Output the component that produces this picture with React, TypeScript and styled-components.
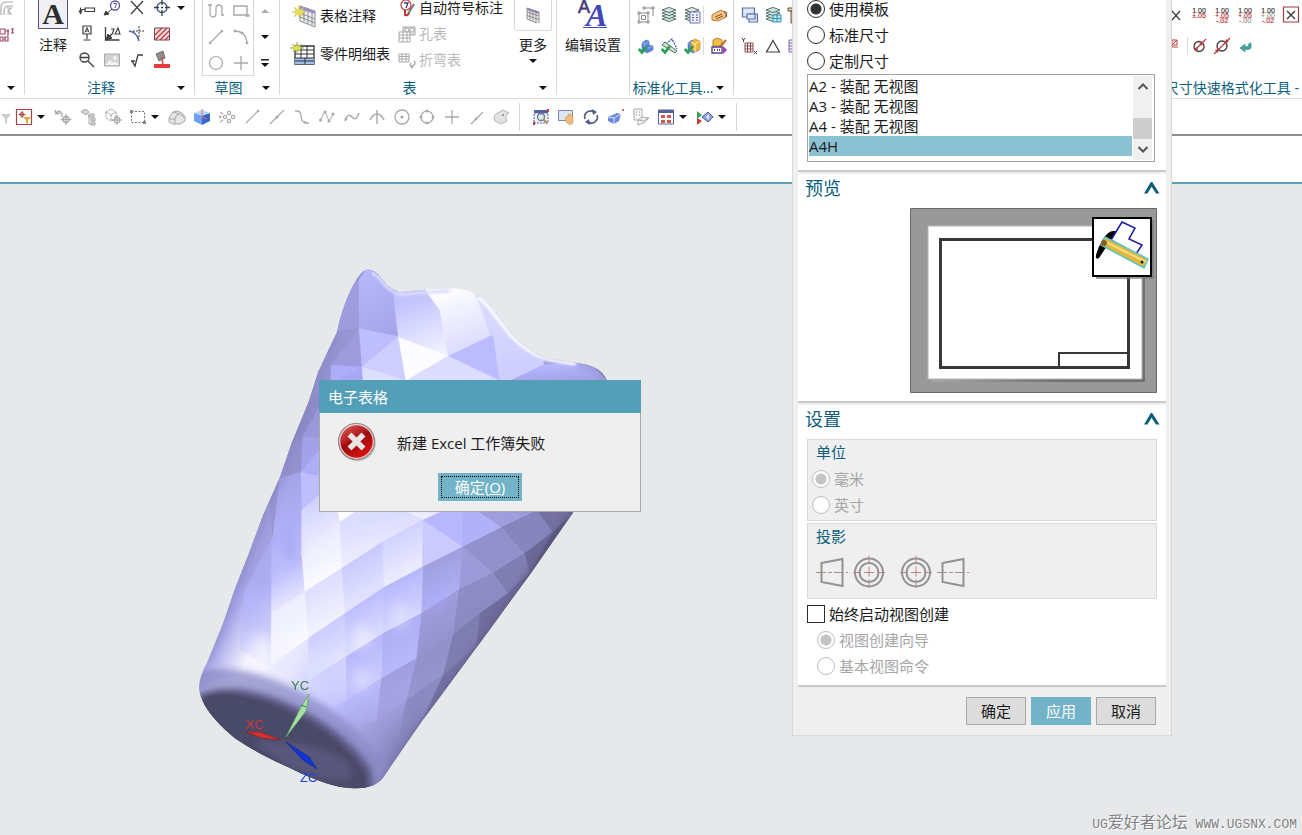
import React, { useState } from "react";
import styled, { createGlobalStyle, css } from "styled-components";

const c = {
  teal: "#0d5f7d",
  bar: "#539fb8",
  accent: "#72b3c8",
  select: "#8ac2d1",
  face: "#efefef",
  line: "#d9d9d9",
  text: "#1b1b1b",
  muted: "#a6a6a6",
  canvas: "#e6e8ea",
};

const GlobalStyle = createGlobalStyle`
  * { box-sizing: border-box; }
  body { margin: 0; background: ${c.canvas}; }
  body, button, input { font-family: "Open Sans", "Noto Sans CJK SC", sans-serif; }
  button { margin: 0; padding: 0; border: 0; background: none; color: inherit; cursor: pointer; }
`;

/* ---------- shell ---------- */

const Shell = styled.div`
  position: relative;
  display: flex;
  flex-direction: column;
  min-height: 100vh;
  overflow: hidden;
  color: ${c.text};
  font-size: 14px;
`;

const Ribbon = styled.header`
  display: flex;
  height: 99px;
  overflow: hidden;
  background: #fff;
  border-bottom: 1px solid ${c.line};
`;

const Group = styled.section<{ $width: number; $last?: boolean }>`
  display: flex;
  flex: none;
  flex-direction: column;
  width: ${(p) => p.$width}px;
  height: 95px;
  border-right: 1px solid ${c.line};
  ${(p) => p.$last && css`margin-left: auto; border-right: 0;`}
`;

const GroupBody = styled.div<{ $indent?: number }>`
  display: flex;
  flex: 1;
  align-items: flex-start;
  padding-left: ${(p) => p.$indent ?? 0}px;
`;

const GroupLabel = styled.footer<{ $end?: boolean }>`
  display: flex;
  align-items: center;
  height: 14px;
  padding-right: ${(p) => (p.$end ? 3 : 9)}px;
  line-height: 14px;
  color: ${c.teal};
  white-space: nowrap;
  justify-content: flex-end;

  span {
    flex: ${(p) => (p.$end ? "none" : 1)};
    text-align: center;
  }
`;

const IconGrid = styled.div<{ $cols: number; $cell: number; $loose?: boolean }>`
  display: grid;
  grid-template-columns: repeat(${(p) => p.$cols}, ${(p) => p.$cell}px);
  grid-auto-rows: ${(p) => (p.$loose ? 18 : 16)}px;
  row-gap: ${(p) => (p.$loose ? 13 : 10)}px;
  padding-top: ${(p) => (p.$loose ? 6 : 0)}px;
`;

const IconButton = styled.button<{ $ruled?: boolean }>`
  display: flex;
  align-items: center;
  justify-content: center;
  border-left: ${(p) => (p.$ruled ? `1px solid ${c.line}` : "0")};

  svg { flex: none; overflow: visible; }
`;

const SketchBox = styled.div`
  padding: 3px 0 4px;
  border: 1px solid ${c.line};
  border-top: 0;
`;

const ArrowColumn = styled.div`
  display: flex;
  flex-direction: column;
  align-items: center;
  gap: 10px;
  width: 22px;
  padding-top: 3px;

  button { height: 16px; }
`;

const BigButton = styled.button<{ $width: number }>`
  display: flex;
  flex-direction: column;
  align-items: center;
  width: ${(p) => p.$width}px;
  font-size: 14px;
  line-height: 16px;
  white-space: nowrap;

  > span { margin-top: 6px; }
  > svg:last-child { margin-top: 6px; }
`;

const LetterTile = styled.i`
  width: 30px;
  height: 29px;
  margin-bottom: 2px;
  border: 1px solid #57508a;
  border-top: 0;
  background: #f0f0f4;
  color: #2d2d30;
  font: bold 30px/28px "Liberation Serif", serif;
`;

const MoreTile = styled.i`
  display: flex;
  align-items: center;
  justify-content: center;
  width: 38px;
  height: 31px;
  border: 1px solid ${c.line};
  border-top: 0;
  border-radius: 0 0 3px 3px;
`;

const LettersIcon = styled.i`
  display: flex;
  justify-content: center;
  height: 31px;
`;

const RowStack = styled.div<{ $large?: boolean }>`
  display: grid;
  grid-auto-rows: ${(p) => (p.$large ? 24 : 16)}px;
  row-gap: ${(p) => (p.$large ? 14 : 10)}px;
  padding-top: ${(p) => (p.$large ? 4 : 0)}px;
  margin-right: ${(p) => (p.$large ? 9 : 11)}px;
`;

const RowButton = styled.button`
  display: flex;
  align-items: center;
  gap: 4px;
  font-size: 14px;
  line-height: 16px;
  white-space: nowrap;

  &:disabled { color: #b9b9b9; }
  svg { flex: none; overflow: visible; }
`;

const Toolbar = styled.nav`
  display: flex;
  align-items: center;
  height: 37px;
  background: #fff;
  border-bottom: 2px solid #8a9092;

  button { width: 25px; height: 24px; flex: none; }
  button:first-child { width: 11px; justify-content: flex-end; }
`;

const ToolArrow = styled(IconButton)`
  && { width: 14px; justify-content: flex-start; padding-left: 1px; }
`;

const Divider = styled.span`
  width: 1px;
  height: 28px;
  margin: 0 8px 0 5px;
  background: ${c.line};
`;

const TabStrip = styled.div`
  height: 48px;
  background: #fff;
  border-bottom: 2px solid #5a9fb5;
`;

const Viewport = styled.main`
  display: flex;
  flex: 1;
  align-items: flex-start;
  background: ${c.canvas};

  svg { display: block; flex: none; }
`;

const Watermark = styled.p`
  position: absolute;
  right: 5px;
  bottom: 0;
  margin: 0;
  color: #808284;
  font: 13px/20px "Liberation Mono", monospace;
  text-shadow: 1px 1px 0 #fff;
  white-space: nowrap;

  span { font: 16px/20px "Noto Sans CJK SC", sans-serif; }
`;

/* ---------- small shared drawings ---------- */

const Down = ({ up, bar }: { up?: boolean; bar?: boolean }) => (
  <svg width="8" height={bar ? 8 : 4} viewBox={bar ? "0 0 8 8" : "0 0 8 4"}>
    {bar && <path d="M0 .8H8" stroke="#111" strokeWidth="1.4" />}
    <path d={up ? "M0 4H8L4 0z" : bar ? "M0 4H8L4 8z" : "M0 0H8L4 4z"} fill={up ? "#aaa" : "#111"} />
  </svg>
);

const G = "#a9a9a9";
const K = "#3c3c3c";
const R = "#c03a3a";
const B = "#4a5fb0";

const stack = (tint: string) => (
  <g fill={tint} stroke="#4a6460" strokeWidth=".9">
    {[12, 9, 6, 3].map((y) => <path key={y} d={`M1 ${y}l7-2.6 7 2.6-7 2.6z`} />)}
  </g>
);
const tick = <path d="M.8 11l3.2 3.4L9 8" fill="none" stroke="#27a052" strokeWidth="2.6" />;
const cubeBlue = (
  <g stroke="#3f5fae" strokeWidth=".5">
    <path d="M4 5l4-3 3 1v4l4 1v4l-6 3-5-3z" fill="#5c86dd" /><path d="M4 5l3 1 4-3M7 6v3l4 1 4-2" fill="none" stroke="#c5d9ff" />
  </g>
);
const numerals = (a: string, b: string, ca: string, cb: string) => (
  <g fontFamily="Liberation Sans" fontSize="7" textAnchor="middle">
    <text x="8" y="6" fill="#222" stroke="#222" strokeWidth=".1">1.00</text>
    <text x="8" y="11" fill={ca} stroke={ca} strokeWidth=".2">{a}</text>
    <text x="8" y="16" fill={cb} stroke={cb} strokeWidth=".2">{b}</text>
  </g>
);

const art: Record<string, React.ReactNode> = {
  leader: <path d="M1.500 13V7.500M1.500 9.500H6M6 8h9.500v3.500H6zM0 10.500l1.500 3 1.500-3" fill="none" stroke={K} strokeWidth="1.200" />,
  balloon: <g fill="none" stroke={K}><circle cx="11" cy="5.500" r="4.500" stroke="#5a55a0" strokeWidth="1.300" /><path d="M8 9l-7 6" /><path d="M0 15l2-4 3 3z" fill={K} /><path d="M9.500 3.500h3L11 8" stroke="#5a55a0" /></g>,
  cross: <path d="M2 1l12 13M14 1L2 14" stroke={K} strokeWidth="1.200" />,
  target: <g fill="none" stroke="#39589a" strokeWidth="1.300"><circle cx="8" cy="7.500" r="5" /><path d="M8-1v6M8 10v6M0 7.500h5M11 7.500h5M7 7.500h2" stroke={K} /></g>,
  datum: <g fill="none" stroke={K}><path d="M4 0h8v8H4zM8 8v5M4.500 14h7" strokeWidth="1.200" /><path d="M6 6.500L8 1.500l2 5M6.500 5h3" /></g>,
  angle: <g fill="none" stroke={K}><path d="M1.500 1v13h14M2 14L9 7" strokeWidth="1.300" /><path d="M2 14l2-6 4 4z" fill={K} /><path d="M7 3h3L8.500 7M11 8l3-6 2 6z" strokeWidth="1.100" /></g>,
  arcCentre: <g fill="none"><path d="M0 5q8 1 10 10" stroke={B} strokeWidth="1.400" /><path d="M10 0v11M4 5h12" stroke={K} strokeDasharray="2 1" /></g>,
  hatch: <g stroke={R} fill="none"><path d="M.5 2h15v12H.5z" fill="#f4d9dc" stroke="#6a4860" /><path d="M1 9l7-7M1 14L13 2M6 14l9-9M11 14l4-4" strokeWidth="1.200" /></g>,
  section: <g fill="none" stroke={K} strokeWidth="1.300"><circle cx="5.500" cy="5.500" r="4.500" /><path d="M1 5.500h9M9 9l6 6" /></g>,
  image: <g><path d="M.5 2h15v12H.5z" fill="#d0d2d4" stroke="#a9abad" /><path d="M1 13l5-5 3 3 2-2 4 4z" fill="#f4f4f4" /><circle cx="11" cy="6" r="2" fill="#efefef" /></g>,
  rough: <path d="M2 9h4M3 9l3 5L9 3h5" fill="none" stroke={K} strokeWidth="1.300" />,
  paint: <g><path d="M2 2l7-3 2 7-6 3z" fill="#8d8f91" stroke="#4c4c4c" strokeWidth=".7" /><path d="M8 5l1 8" stroke="#d44" strokeWidth="1.500" /><path d="M0 12h16v4H0z" fill="#e63b3b" /></g>,
  profile: <path d="M2 1v9q0 4 3 4t3-4V5q0-3 3-3t3 3v7M0 2h4M13 12h3" fill="none" stroke={G} strokeWidth="1.300" />,
  rect: <path d="M1 3h13v9H1zM0 3h2M13 12h3v1h-3z" fill="none" stroke={G} strokeWidth="1.400" />,
  line: <g stroke={G} fill={G}><path d="M2 14L14 2" strokeWidth="1.200" /><circle cx="2" cy="14" r=".9" /><circle cx="14" cy="2" r=".9" /></g>,
  arc: <g stroke={G} fill="none"><path d="M1 2q12 0 13 12" strokeWidth="1.300" /><circle cx="2" cy="2" r="1" fill={G} /><circle cx="9" cy="4" r="1" fill={G} /><circle cx="14" cy="14" r="1" fill={G} /></g>,
  circle: <circle cx="8" cy="8" r="6.500" fill="none" stroke={G} strokeWidth="1.200" />,
  plus: <path d="M8 1v14M1 8h14" stroke={G} strokeWidth="1.300" />,
  tableNote: <g transform="translate(2 0)"><path d="M6 2l15 5v16L6 17z" fill="#eef0f2" stroke="#8b8e92" /><path d="M6 2l15 5v3L6 5z" fill="#a68ac8" /><path d="M6 9l15 6M6 13l15 6M10 5v13M14 7v13M18 8v13" stroke="#8b8e92" fill="none" /><path d="M5 1l1 5 4-3-2 4 4 1-4 1 2 4-4-3-1 4-1-4-4 3 2-4-4-1 4-1-2-4 4 3z" fill="#e9e05a" stroke="#b7b04a" strokeWidth=".4" /></g>,
  partsList: <g><path d="M3 4h19v18H3z" fill="#fff" stroke="#333" strokeWidth="1.300" /><path d="M3 16h19v6H3z" fill="#9fc0ea" /><path d="M3 8h19M3 12h19M3 16h19M3 19h19M9 4v12M15 4v12M13 16v6" stroke="#333" fill="none" /><path d="M5 0l1 4 4-2-2 3 4 1-4 1 1 3-3-2-1 3-1-3-3 2 1-3-4-1 4-1-2-3 4 2z" fill="#e3da55" stroke="#6e9a4c" strokeWidth=".4" /></g>,
  autoBalloon: <g fill="none"><path d="M15 4L9 14" stroke="#777" strokeWidth="2" /><circle cx="7" cy="5" r="5" stroke={R} strokeWidth="1.200" /><path d="M5 3h4L7 8" stroke="#333a80" strokeWidth="1.300" /><path d="M6 10v5q3 1 4-2" stroke={R} strokeWidth="2" /></g>,
  holeTable: <g fill="#fff" stroke={G}><path d="M4 1h12v8H4z" fill="#ddd" /><circle cx="8" cy="4" r="2" /><circle cx="13" cy="4" r="2" /><path d="M0 6h11v10H0zM0 9h11M0 12h11M4 6v10M8 6v10" /></g>,
  bendTable: <g fill="none" stroke={G}><path d="M0 2h10v8H0zM0 4.500h10M0 7h10M3 2v8M7 2v8" /><path d="M15 9q3 3-3 6M12 11q-2 3 2 5" strokeWidth="1.500" /></g>,
  moreTable: <g><path d="M2 1l12 4v12L2 12z" fill="#f1f0f5" stroke="#777" strokeWidth=".8" /><path d="M2 1l12 4v2L2 3z" fill="#a47fc6" /><path d="M2 5l12 4M2 8.500l12 4M5 2v11M8 3v11M11 4v12" stroke="#777" strokeWidth=".8" /></g>,
  copyGrid: <g fill="none" stroke="#8b8b8b"><path d="M5 1h10v8M1 6h9v9H1zM3.500 8.500h4v4h-4z" /><path d="M0 5h2v2H0zM9 5h2v2H9zM0 14h2v2H0zM9 14h2v2H9zM14 0h2v2h-2zM5 0h2v2H5z" fill="#fff" /></g>,
  layers: stack("#cfe4df"),
  layersList: <g>{stack("#d8e4e0")}<path d="M6 5h10v11H6z" fill="#f1f4fc" stroke="#6a72b0" /><path d="M8 8h2M12 8h2M8 10.500h2M12 10.500h2M8 13h2M12 13h2" stroke="#4854a0" /></g>,
  tag: <g><path d="M1 8l9-5 5 3v4l-8 4-6-1z" fill="#f5c583" stroke="#b77a3a" /><path d="M4 10l7-3M5 12l7-3" stroke="#8a5320" /><path d="M13 5q4-1 2 5" fill="none" stroke="#444" /></g>,
  boxTick: <g>{cubeBlue}{tick}</g>,
  sheetTick: <g><path d="M5 6l6-5 5 10" fill="none" stroke="#3d5ac0" strokeDasharray="2 1" strokeWidth="1.300" /><path d="M1 7l3-3 12 9-2 2z" fill="#d9e4a8" stroke="#4b6b9a" />{tick}</g>,
  goldTick: <g>{cubeBlue}<path d="M7 4l4-3 5 2v8l-5 3-4-3z" fill="#f1b73a" stroke="#b98020" strokeWidth=".6" /><path d="M7 4l4 2 5-3M11 6v8" fill="none" stroke="#fff0b8" />{tick}</g>,
  goldEdit: <g><path d="M2 2l4-2 5 2v6H2z" fill="#f2c04b" stroke="#b88326" /><path d="M15 2L9 9" stroke="#b0722c" strokeWidth="2" /><path d="M1 9h10v6H1z" fill="#fff" stroke="#57408a" strokeWidth="1.400" /><path d="M3 12h1M6 12h1M8 12h1" stroke="#57408a" strokeWidth="2" /><path d="M12 8l4 4-4 4z" fill="#9a3fc0" /></g>,
  windows: <g fill="#dbe6fa" stroke="#5c6fa6" strokeWidth="1.200"><path d="M.5 1h12v9H.5z" /><path d="M7 7h8.500v8H7z" /><path d="M5 7h8v5H5z" /></g>,
  layersBlue: <g>{stack("#cfe4df")}<path d="M8 8h8v7H8zM8 11.500h8M12 8v7" fill="#b9e8f5" stroke="#2f93b4" /></g>,
  hammer: <path d="M0 1h8v3H0zM3 4h3v12H3z" fill="#f0d080" stroke="#555" />,
  meshXY: <g fill="none"><path d="M3 5h8v9H3zM3 8h8M3 11h8M5.500 5v9M8.500 5v9" stroke="#8a4a4a" /><path d="M0 0l1.500 2L3 0M1.500 2v2M12 13l3 3M15 13l-3 3" stroke={K} /></g>,
  delta: <path d="M8 2.500L14.500 14h-13z" fill="none" stroke={K} strokeWidth="1.200" />,
  listPurple: <path d="M1 2h14v12H1zM1 5h14M1 8h14M1 11h14" fill="#f3effa" stroke="#8463b0" />,
  tolX: <path d="M4 4l8 9M12 4l-8 9" stroke={K} strokeWidth="1.300" />,
  tolA: numerals("±.05", "", R, R),
  tolB: numerals("+.05", "-.02", R, R),
  tolC: numerals("+.05", "-.00", R, "#999"),
  tolD: numerals("+.00", "-.02", "#999", R),
  tolBox: <g><path d="M.5 0h15v15H.5z" fill="none" stroke="#a03c3c" strokeWidth="1.200" /><path d="M4 4l8 8M12 4l-8 8" stroke={K} strokeWidth="1.400" /></g>,
  phi: <path d="M4 2h5v5H4zM0 9h10M4 7l5-5" fill="none" stroke={R} />,
  diaOne: <g fill="none"><circle cx="8" cy="8.500" r="5" stroke={K} strokeWidth="1.300" /><path d="M4 12L15 1" stroke={R} strokeWidth="1.300" /><path d="M3.500 13l1.500-4 2.500 2.500z M12 4l-1 4-3-3z" fill={R} /></g>,
  diaTwo: <g fill="none"><circle cx="8" cy="8" r="5" stroke={K} strokeWidth="1.300" /><path d="M0 16L16 0" stroke={R} strokeWidth="1.300" /><path d="M5 11l-4 1 3 3zM11 5l1-4 3 3z" fill={R} /></g>,
  back: <g fill="#43a0a0" stroke="#2f8585" strokeWidth=".5"><path d="M3 10l5-4v2.500h3.500V6l2-1.500Q16 11 11 11.500H8V14z" /></g>,
  filterCut: <path d="M6 5h10l-4 5v5l-2-1v-4z" fill="#ccc" />,
  filter: <g><path d="M.5.5h15v15H.5z" fill="#fff" stroke="#a64444" strokeWidth="1.200" /><path d="M6 2v7M2.500 5.500h7" stroke="#a64444" /><circle cx="6" cy="5.500" r="2" fill="none" stroke="#a64444" /><path d="M7 8h8l-3 3v4l-2-1v-3z" fill="#e2a63a" /></g>,
  snapMove: <g fill="none" stroke={G} strokeWidth="1.300"><path d="M1 4q4-4 6 1v3M0 1l1 4 4-1M11 5v11M5.500 10.500h11" /><circle cx="11" cy="10.500" r="3" /></g>,
  snapTree: <g fill="#d4d4d4" stroke={G}><path d="M1 3q4-5 8 0l-3 3zM9 5h5v3H9zM11 9h4v3h-4zM11 13h4v3h-4z" /><path d="M9 6v9h2" fill="none" /></g>,
  snapCube: <g fill="none" stroke="#999" strokeDasharray="2 1"><path d="M1 3l5-3 5 3v6l-5 3-5-3zM1 3l5 3 5-3M6 6v6" /><g strokeDasharray="none"><circle cx="12" cy="11" r="3" /><path d="M12 6v10M7 11h10" /></g></g>,
  marquee: <g><path d="M1.500 2.500h13v11h-13z" fill="none" stroke="#777" strokeDasharray="2 1.500" /><path d="M0 1h3v3H0zM13 12h3v3h-3z" fill="#888" /></g>,
  solidGray: <g fill="#e6e6e6" stroke="#a8a8a8"><path d="M0 10q1-5 4-7l4-1q6 1 8 6v4l-5 3h-7L0 13z" /><path d="M0 10h6v5M6 10q1-5 4-5 4 1 5 4M4 3l6 2" fill="none" /></g>,
  cubeColor: <g><path d="M0 4l8 2v10l-8-4z" fill="#6e9ff0" /><path d="M16 4L8 6v10l8-4z" fill="#3667cc" /><path d="M0 4l8-3 8 3-8 3z" fill="#b6d6fa" /><path d="M8 0v8l5 2" stroke="#e07080" fill="none" /></g>,
  dots: <g fill="none" stroke={G} strokeWidth="1.200"><circle cx="10" cy="4" r="1.700" /><circle cx="10" cy="12" r="1.700" /><circle cx="6" cy="8" r="1.700" /><circle cx="14" cy="8" r="1.700" /><path d="M1 3l3 2M1 13l3-2M0 7l2 1-2 1" /></g>,
  segment: <g><path d="M2 14L14 2" stroke={G} strokeWidth="1.200" /><circle cx="14" cy="2" r="1.300" fill={G} /></g>,
  midpoint: <g><path d="M1 15L15 1" stroke={G} strokeWidth="1.200" /><circle cx="8" cy="8" r="1.500" fill={G} /></g>,
  sCurve: <path d="M1 2h2q4 0 4 5t4 7h4M11 12v3" fill="none" stroke={G} strokeWidth="1.300" />,
  poly: <g fill={G}><path d="M1 12L6 2l4 10 5-8" fill="none" stroke={G} /><circle cx="1.500" cy="11" r="1.500" /><circle cx="6" cy="3" r="1.500" /><circle cx="10" cy="12" r="1.500" /><circle cx="14" cy="5" r="1.500" /></g>,
  spline: <g><path d="M1 12q3-9 7-4t7-4" fill="none" stroke={G} strokeWidth="1.400" /><circle cx="2" cy="10" r="1.400" fill={G} /></g>,
  intersect: <path d="M8 1v14M1 11q3-6 7-6t7 6" fill="none" stroke={G} strokeWidth="1.400" />,
  centre: <g><circle cx="8" cy="8" r="7" fill="none" stroke={G} strokeWidth="1.300" /><circle cx="8" cy="8" r="1.600" fill={G} /></g>,
  quadrant: <g fill={G}><circle cx="8" cy="8" r="6" fill="none" stroke={G} strokeWidth="1.200" />{[[8, 2], [8, 14], [2, 8], [14, 8]].map(([x, y]) => <circle key={`${x}-${y}`} cx={x} cy={y} r="1.500" />)}</g>,
  onCurve: <g><path d="M2 15L14 3" stroke={G} strokeWidth="1.300" /><circle cx="7" cy="10" r="1.400" fill={G} /></g>,
  surface: <g><path d="M2 5l7-4 6 3q-5 3-2 8l-6 3-6-3q-2-5 1-7z" fill="#e2e2e2" stroke="#b5b5b5" /><circle cx="9" cy="6" r="1" fill="#888" /></g>,
  fit: <g><path d="M1 1h14v3H1z" fill="#5363a8" /><path d="M1 4h14v10H1z" fill="#edf0fa" stroke="#5363a8" strokeDasharray="2 1" /><circle cx="8" cy="8" r="3.500" fill="#dcecf6" stroke="#777" strokeWidth="1.300" /><path d="M10.500 10.500L14 14" stroke="#b08b50" strokeWidth="1.800" /><path d="M0 13h2v3H0zM14 0h2v3h-2z" fill={R} /></g>,
  pan: <g><path d="M.5 1.500h14v10H.5z" fill="#dde6f4" stroke="#7b87a5" /><path d="M7 9l3-2v-2h2l3 3v6l-3 2-4-3z" fill="#ecbc7a" stroke="#c28d4c" strokeWidth=".5" /></g>,
  rotate: <g fill="none" stroke="#4c5a80" strokeWidth="1.600"><path d="M2 10a6 6 0 0 1 9-7M14 6a6 6 0 0 1-9 7" /><path d="M9 0l5 3-4 3zM7 16l-5-3 4-3z" fill="#4c5a80" stroke="none" /></g>,
  prism: <g><path d="M0 8l9-4 4 1-2 7-5 3-6-3z" fill="#6a8ae0" /><path d="M0 8l6 1 7-4M6 9v6" fill="none" stroke="#dde6ff" /><circle cx="15" cy="1" r="1" fill={R} /></g>,
  sheetCube: <g fill="#f7f7f7" stroke={G}><path d="M1 0h8v11H1z" /><path d="M3 3h1M6 3h1M3 6h1M6 6h1" stroke="#888" /><path d="M5 11l4-3 7 1-4 4-7 3zM5 11l5 1 6-3" /></g>,
  tiles: <g><path d="M.5 1h15v14H.5z" fill="#fff" stroke="#56609a" /><path d="M.5 1h15v3H.5z" fill="#56609a" /><g fill="#d45555"><path d="M3 6h4v3H3zM9 6h4v3H9zM3 11h4v3H3zM9 11h4v3H9z" /></g></g>,
  play: <g><path d="M0 2l5 4-5 4z" fill="#3b9e5b" /><path d="M0 9l5 3-5 4z" fill={R} /><path d="M5 8l6-5 5 5-5 5z" fill="#8fa6dc" stroke="#4a5a90" /><path d="M9 8l3-3v6z" fill="#e6ecfb" /></g>,
  topCut: <path d="M1 15V7q0-5 6-5h6M4 15v-4q0-5 5-5h4M7 8h4L8 11l3 3H7" fill="none" stroke={G} strokeWidth="1.200" />,
  redCut: <path d="M0 3h5v5H0zM5 5h4M8 3v7M11 3h3M12.500 3v4M11 7h3M0 11h3v4H0zM5 11h3v4H5zM4 13h1" fill="none" stroke="#a04a68" strokeWidth="1.200" />,
};

const Art = ({ name, size = 16 }: { name: string; size?: number }) => (
  <svg width={size} height={size} viewBox={`0 0 ${size} ${size}`} aria-hidden="true">{art[name]}</svg>
);

const Tools = ({ names, ruled }: { names: string[]; ruled?: string }) => (
  <>
    {names.map((n) => (
      <IconButton key={n} aria-label={n} $ruled={n === ruled}><Art name={n} /></IconButton>
    ))}
  </>
);

/* ---------- template panel ---------- */

const Panel = styled.aside`
  position: absolute;
  top: 0;
  right: 130px;
  width: 380px;
  padding: 0 5px;
  background: ${c.face};
  border: 1px solid ${c.line};
  border-top: 0;
  font-size: 15px;
`;

const Section = styled.section<{ $tail?: number }>`
  padding: 0 9px ${(p) => p.$tail ?? 8}px;
  margin-bottom: 2px;
  background: #fff;
  border-bottom: 2px solid #c9c9c9;
`;

const SectionHead = styled.button`
  display: flex;
  align-items: center;
  justify-content: space-between;
  width: 100%;
  height: 28px;
  margin-bottom: 6px;

  h2 {
    margin: 0 0 0 -2px;
    color: ${c.teal};
    font-size: 18px;
    font-weight: 400;
    line-height: 24px;
  }
  svg { margin-right: -3px; }
`;

const Choices = styled.div<{ $indent?: number; $top?: number; $bottom?: number }>`
  display: flex;
  flex-direction: column;
  gap: 9px;
  padding: ${(p) => p.$top ?? 0}px 0 ${(p) => p.$bottom ?? 0}px ${(p) => p.$indent ?? 0}px;
`;

const Choice = styled.label<{ $off?: boolean }>`
  display: flex;
  align-items: center;
  gap: 4px;
  height: 17px;
  color: ${(p) => (p.$off ? c.muted : c.text)};
  line-height: 16px;
`;

const Mark = styled.input`
  appearance: none;
  flex: none;
  width: 18px;
  height: 18px;
  margin: 0;
  background: #fff;
  border: 1px solid #2c2c2c;
  border-radius: ${(p) => (p.type === "radio" ? "50%" : "0")};

  &:disabled { border-color: #bdbdbd; }
  &:checked { background: radial-gradient(circle, #333 0 5px, #fff 6px); }
  &:checked:disabled { background: radial-gradient(circle, #c4c4c4 0 5px, #fff 6px); }
`;

const ListBox = styled.div`
  display: flex;
  height: 88px;
  margin: 5px 2px 0 0;
  padding: 1px;
  border: 1px solid #a3a3a3;
`;

const List = styled.ul`
  flex: 1;
  margin: 0;
  padding: 0;
  list-style: none;
`;

const Item = styled.li<{ $on: boolean }>`
  height: 20px;
  line-height: 20px;
  background: ${(p) => (p.$on ? c.select : "transparent")};
  cursor: default;
`;

const Scroll = styled.div`
  display: flex;
  flex-direction: column;
  align-items: center;
  width: 19px;
  margin: 0 1px;
  background: #f0f0f0;

  svg { display: block; margin: 7px 0; }
  i { width: 100%; height: 21px; margin-top: auto; background: #cdcdcd; }
`;

const PreviewSvg = styled.svg`
  display: block;
  margin-left: auto;
`;

const Field = styled.fieldset`
  display: flow-root;
  min-width: 0;
  margin: 0 0 2px;
  padding: 0 0 7px;
  background: ${c.face};
  border: 1px solid ${c.line};

  h3 {
    margin: 3px 0 8px 8px;
    color: ${c.teal};
    font-size: 15px;
    font-weight: 400;
    line-height: 19px;
  }
`;

const Projections = styled.div`
  display: flex;
  gap: 14px;
  height: 37px;
  padding-left: 9px;
`;

const Footer = styled.footer`
  display: flex;
  justify-content: flex-end;
  gap: 5px;
  padding: 8px 10px 10px;
`;

const PushButton = styled.button<{ $primary?: boolean }>`
  width: 60px;
  height: 28px;
  font-size: 15px;
  line-height: 20px;
  border: 1px solid ${(p) => (p.$primary ? c.accent : "#a9a9a9")};
  background: ${(p) => (p.$primary ? c.accent : "#dcdcdc")};
  color: ${(p) => (p.$primary ? "#fff" : c.text)};
`;

const Head = ({ title }: { title: string }) => (
  <SectionHead>
    <h2>{title}</h2>
    <svg width="16" height="12" viewBox="0 0 16 12"><path d="M0 11.500L6.800 0h1.400L15.500 11.500H12L7.600 4.800 3.400 11.500z" fill={c.teal} /></svg>
  </SectionHead>
);

const Preview = () => (
  <PreviewSvg width="247" height="185" viewBox="0 0 247 185">
    <defs>
      <linearGradient id="sheetShade"><stop offset="0" stopColor="#a6a6a6" /><stop offset=".6" stopColor="#707070" /></linearGradient>
    </defs>
    <path d="M.5.5h246v184H.5z" fill="#999" stroke="#686868" />
    <path d="M22 22h213v152H22z" fill="url(#sheetShade)" />
    <path d="M18 18h214v153H18z" fill="#fff" stroke="#b5b5b5" />
    <path d="M30.500 31.500h188v128h-188z" fill="none" stroke="#383838" strokeWidth="3" />
    <path d="M149 159v-14h69" fill="none" stroke="#383838" strokeWidth="2" />
    <path d="M186 12h58v59h-58z" fill="#777" opacity=".7" />
    <path d="M183 10h58v58h-58z" fill="#fff" stroke="#000" strokeWidth="2" />
    <path d="M189 50q-4 2-3-3 2-8 7-16 6-9 11-8h2l-2 6-5 6z" fill="#000" />
    <path d="M201 32l11-18 13 6-6 11 13 6-6 9z" fill="#fff" stroke="#1616a0" strokeWidth="1.500" />
    <path d="M191 37l4-8 43 22-4 9z" fill="#e2b83c" stroke="#55c4d2" strokeWidth="1.500" />
    <path d="M194 33l42 21" stroke="#f6dd80" strokeWidth="2" />
    <circle cx="194" cy="35" r="3" fill="#8a6020" /><circle cx="232" cy="54" r="1.500" fill="#222" />
  </PreviewSvg>
);

const Cone = ({ x }: { x: number }) => (
  <g transform={`translate(${x} 0)`}>
    <path d="M5.500 9l21-4v27l-21-4z" fill="none" stroke="#929292" strokeWidth="2" />
    <path d="M0 18.500h32" stroke="#b58888" strokeDasharray="10 2 4 2" />
  </g>
);
const Rings = ({ x }: { x: number }) => (
  <g transform={`translate(${x} 18.500)`} fill="none" stroke="#929292" strokeWidth="2">
    <circle r="14" /><circle r="9.500" />
    <path d="M-16 0h32M0-17v34" stroke="#b58888" strokeWidth="1" strokeDasharray="8 3 10 3" />
  </g>
);

const TemplatePanel = () => {
  const items = ["A2 - 装配 无视图", "A3 - 装配 无视图", "A4 - 装配 无视图", "A4H"];
  const [picked, setPicked] = useState("A4H");
  const [source, setSource] = useState("使用模板");
  const [always, setAlways] = useState(false);
  return (
    <Panel>
      <Section>
        <Choices>
          {["使用模板", "标准尺寸", "定制尺寸"].map((s) => (
            <Choice key={s}>
              <Mark type="radio" name="source" checked={source === s} onChange={() => setSource(s)} />{s}
            </Choice>
          ))}
        </Choices>
        <ListBox>
          <List role="listbox" aria-label="模板">
            {items.map((t) => (
              <Item key={t} role="option" aria-selected={t === picked} $on={t === picked} onClick={() => setPicked(t)}>{t}</Item>
            ))}
          </List>
          <Scroll aria-hidden="true">
            <svg width="10" height="7" viewBox="0 0 10 7"><path d="M.5 6L5 1.500 9.500 6" fill="none" stroke="#555" strokeWidth="2" /></svg>
            <i />
            <svg width="10" height="7" viewBox="0 0 10 7"><path d="M.5 1L5 5.500 9.500 1" fill="none" stroke="#555" strokeWidth="2" /></svg>
          </Scroll>
        </ListBox>
      </Section>
      <Section>
        <Head title="预览" />
        <Preview />
      </Section>
      <Section $tail={11}>
        <Head title="设置" />
        <Field disabled>
          <h3>单位</h3>
          <Choices $indent={4}>
            <Choice $off><Mark type="radio" name="unit" defaultChecked />毫米</Choice>
            <Choice $off><Mark type="radio" name="unit" />英寸</Choice>
          </Choices>
        </Field>
        <Field disabled>
          <h3>投影</h3>
          <Projections>
            <IconButton aria-label="第一角投影"><svg width="70" height="37" viewBox="0 0 70 37"><Cone x={-1} /><Rings x={52} /></svg></IconButton>
            <IconButton aria-label="第三角投影"><svg width="70" height="37" viewBox="0 0 70 37"><Rings x={15} /><Cone x={36} /></svg></IconButton>
          </Projections>
        </Field>
        <Choices $top={4} $bottom={9}>
          <Choice><Mark type="checkbox" checked={always} onChange={() => setAlways(!always)} />始终启动视图创建</Choice>
        </Choices>
        <Choices $indent={10}>
          <Choice $off><Mark type="radio" name="view" defaultChecked disabled />视图创建向导</Choice>
          <Choice $off><Mark type="radio" name="view" disabled />基本视图命令</Choice>
        </Choices>
      </Section>
      <Footer>
        <PushButton>确定</PushButton>
        <PushButton $primary>应用</PushButton>
        <PushButton>取消</PushButton>
      </Footer>
    </Panel>
  );
};

/* ---------- message box ---------- */

const Message = styled.div`
  position: absolute;
  top: 380px;
  left: 319px;
  width: 322px;
  font-size: 15px;

  h1 {
    height: 33px;
    margin: 0;
    padding-left: 9px;
    background: ${c.bar};
    color: #fff;
    font-size: 15px;
    font-weight: 400;
    line-height: 34px;
  }
`;

const MessageBody = styled.div`
  display: flex;
  flex-direction: column;
  align-items: center;
  padding-bottom: 10px;
  background: ${c.face};
  border: 1px solid #a6a8aa;
  border-top: 0;

  p {
    display: flex;
    align-items: center;
    align-self: stretch;
    gap: 20px;
    height: 58px;
    margin: 0 0 2px;
    padding-left: 17px;
  }
`;

const OkButton = styled(PushButton)`
  width: 84px;
  outline: 1px dotted #000;
  outline-offset: -4px;
`;

const ErrorMessage = () => (
  <Message role="alertdialog" aria-label="电子表格">
    <h1>电子表格</h1>
    <MessageBody>
      <p>
        <svg width="40" height="40" viewBox="0 0 40 40">
          <defs><linearGradient id="redDisc" x2=".6" y2="1"><stop offset="0" stopColor="#e46a62" /><stop offset=".45" stopColor="#b51f22" /><stop offset=".55" stopColor="#98090e" /><stop offset="1" stopColor="#e2120f" /></linearGradient></defs>
          <circle cx="20.500" cy="21" r="18.500" fill="#bbb" opacity=".7" />
          <circle cx="19.500" cy="19.500" r="18" fill="url(#redDisc)" stroke="#8e8e8e" strokeWidth="1.200" />
          <circle cx="19.500" cy="19.500" r="16.800" fill="none" stroke="#ead9d9" strokeWidth="1.200" />
          <path d="M12.500 12.500l14 14M26.500 12.500l-14 14" stroke="#e8e6e4" strokeWidth="5.500" />
        </svg>
        新建 Excel 工作簿失败
      </p>
      <OkButton $primary>确定(<u>O</u>)</OkButton>
    </MessageBody>
  </Message>
);

/* ---------- faceted cup ---------- */

type Facet = [string, string, string?];

// Facets around the rim and down the left side, in thirds of a pixel.
const upperFacets: Facet[] = [
  ["533,20 490,75 450,165 436,215 507,205 507,60", "#9f9ee0", "#9d9bdc"],
  ["507,60 533,20 580,60 610,95 625,230 507,205", "#b5b5fa", "#a6a5ea"],
  ["436,215 507,205 422,315 385,340", "#9694d2"],
  ["507,205 516,320 422,315", "#9d9bdc"],
  ["507,205 625,230 516,320", "#bebeff"],
  ["625,230 648,362 516,320", "#cfcfff"],
  ["625,230 775,288 648,362", "#fcfcff"],
  ["422,315 516,320 420,372", "#adadf8"],
  ["516,320 420,372 420,400 522,400", "#a9a8f2"],
  ["516,320 648,362 640,400 522,400", "#dedeff"],
  ["385,335 422,315 420,372 355,440", "#9593d2"],
  ["355,430 420,372 388,460 337,530 300,560", "#8e8cca"],
  ["388,440 388,535 337,530", "#9a98da"],
  ["337,530 388,535 388,570 332,637", "#a3a2e8"],
  ["300,550 337,530 332,637 268,655", "#9391ce"],
  ["388,570 388,648 332,637", "#aeaef8"],
  ["332,637 388,648 388,705 335,750", "#bebeff"],
  ["268,655 332,637 335,750 247,835", "#a3a2e6", "#b4b4fc"],
  ["268,650 247,835 190,900 186,860 220,765", "#9694d2"],
  ["610,100 700,85 750,150 775,288 625,230", "#c2c2ff", "#f0f0ff"],
  ["700,80 790,70 850,90 900,225 775,288 750,150", "#fbfbff", "#d9d9ff"],
  ["775,288 910,225 930,400", "#bbbbff"],
  ["775,288 930,362 930,400 640,400 648,362", "#dcdcff"],
  ["850,90 900,130 980,240 1060,300 1060,315 960,362 930,362 910,225", "#dadaff", "#cdcdff"],
  ["960,362 1060,315 1150,305 1210,320 1255,365 1255,400 930,400", "#b6b6ff", "#9694d2"],
];

// Diagonal bands under the message box down to the foot.
const lowerFacets: Facet[] = [
  ["240,0 247,115 165,270 180,150", "#9c9ada", "#a5a4e6"],
  ["165,270 245,115 245,240 155,360", "#a6a5ea", "#bcbcff"],
  ["245,115 335,30 335,160 245,240", "#a9a9f4", "#c6c6ff"],
  ["335,30 388,-15 430,-40 445,37 450,65 335,160", "#d0d0ff", "#f2f2ff"],
  ["445,37 495,37 450,65", "#ffffff"],
  ["155,360 245,240 243,500 150,450", "#adadf6", "#dedeff"],
  ["245,240 335,160 345,275 245,340", "#b6b6ff", "#f2f2ff"],
  ["335,160 450,65 455,205 345,275", "#e8e8ff", "#ffffff"],
  ["450,65 495,37 655,37 700,60 578,125 455,205", "#dcdcff", "#f4f4ff"],
  ["655,37 750,37 700,60", "#ededff"],
  ["245,340 345,275 355,415 270,475 243,500", "#ececff", "#ffffff"],
  ["345,275 455,205 465,340 355,415", "#dcdcff", "#f8f8ff"],
  ["455,205 578,125 582,262 465,340", "#c6c6ff", "#ececff"],
  ["578,125 700,60 697,200 582,262", "#cfcfff", "#f4f4ff"],
  ["700,60 820,140 700,200", "#cacaff"],
  ["700,60 750,37 820,37 820,140", "#b7b7ff"],
  ["820,37 870,37 935,82 820,140", "#b1b1fa"],
  ["870,37 1030,37 935,82", "#9f9dde"],
  ["355,415 465,340 468,470 355,540", "#c9c9ff", "#ececff"],
  ["465,340 582,262 580,400 468,470", "#b9b9ff", "#e8e8ff"],
  ["582,262 700,200 695,340 580,400", "#b4b4fe", "#e0e0ff"],
  ["700,200 820,140 808,268 695,340", "#9d9cdc", "#b7b7ff"],
  ["820,140 910,218 808,268", "#9c9ad8"],
  ["820,140 935,82 1005,160 910,218", "#9391cc"],
  ["935,82 1030,37 1050,37 1090,95 1005,160", "#8785be"],
  ["1045,37 1160,30 1090,95", "#7371a0"],
  ["360,540 468,470 470,600 400,640", "#cfcfff", "#e4e4ff"],
  ["468,470 580,400 575,535 470,600", "#b4b4fc", "#d4d4ff"],
  ["580,400 695,340 680,475 575,535", "#adadf4", "#bbbbff"],
  ["695,340 808,268 790,405 680,475", "#9f9ddd", "#9391ca"],
  ["808,268 910,218 955,280 870,340 790,405", "#8f8dc6", "#8a88be"],
  ["910,218 1005,160 1020,215 955,280", "#7f7db2"],
  ["1005,160 1090,95 1020,215", "#6c6a98"],
  ["470,600 575,535 560,660 500,690", "#b9b9fc", "#c0c0ff"],
  ["575,535 680,475 650,600 560,660", "#9e9cdc", "#acacf0"],
  ["680,475 790,405 760,525 650,600", "#9290c8", "#9896d0"],
  ["790,405 870,340 860,440 760,525", "#7f7db0"],
  ["870,340 955,280 1020,215 860,450", "#706e9e"],
  ["560,660 650,600 620,740 580,740", "#a3a2e2", "#9c9ad8"],
  ["650,600 760,525 700,650 620,740", "#8b89c0"],
  ["760,525 860,440 700,660", "#7472a4"],
];

const outline =
  "M368 269.500C361 270 357 279 353 285C347 297 341 312 337 332L318 372L308 403L292 442L280 477L263 515L250 550L235 588L223 623L208 660Q199 677 199 688C200 704 216 723 236 739Q258 754 290 768Q328 787 350 788Q374 790 383 778L407 743L423 720L477 647L532 572L573 513L607 380Q601 367 584 364Q562 360 547 358Q526 350 510 331L490 305Q478 290 453 288.500Q425 289 400 292Q392 289 387 285C380 276 377 270 368 269.500z";

const Facets = ({ id, list, move }: { id: string; list: Facet[]; move: string }) => (
  <g transform={`translate(${move}) scale(.33333)`}>
    <defs>
      {list.map(([, from, to], i) => to && (
        <linearGradient key={i} id={`${id}${i}`} x1=".3" x2=".6" y1="0" y2="1">
          <stop offset=".15" stopColor={from} /><stop offset="1" stopColor={to} />
        </linearGradient>
      ))}
    </defs>
    {list.map(([pts, from, to], i) => {
      const fill = to ? `url(#${id}${i})` : from;
      return <polygon key={i} points={pts} fill={fill} stroke={fill} strokeWidth="1" />;
    })}
  </g>
);

const Cup = () => (
  <svg width="650" height="651" viewBox="0 184 650 651" role="img" aria-label="模型">
    <defs>
      <clipPath id="cupClip"><path d={outline} /></clipPath>
      <linearGradient id="cupBody" gradientUnits="userSpaceOnUse" x1="250" y1="518" x2="499" y2="644">
        <stop offset="0" stopColor="#8c8ac4" /><stop offset=".1" stopColor="#a6a5e8" />
        <stop offset=".22" stopColor="#f4f3ff" /><stop offset=".38" stopColor="#e6e6ff" />
        <stop offset=".58" stopColor="#bcbcff" /><stop offset=".78" stopColor="#9694d0" />
        <stop offset=".92" stopColor="#716f9f" /><stop offset="1" stopColor="#5b5983" />
      </linearGradient>
      <linearGradient id="footFade" gradientUnits="userSpaceOnUse" x1="302" y1="644" x2="280" y2="694">
        <stop offset="0" stopColor="#fff" /><stop offset="1" stopColor="#000" />
      </linearGradient>
      <mask id="footMask" maskUnits="userSpaceOnUse" x="180" y="480" width="420" height="320"><path d="M180 480H600V800H180z" fill="url(#footFade)" /></mask>
      <filter id="soft1" x="-30%" y="-30%" width="160%" height="160%"><feGaussianBlur stdDeviation=".8" /></filter>
      <filter id="soft3" x="-30%" y="-30%" width="160%" height="160%"><feGaussianBlur stdDeviation="3" /></filter>
      <filter id="soft6" x="-30%" y="-30%" width="160%" height="160%"><feGaussianBlur stdDeviation="6" /></filter>
    </defs>
    <g clipPath="url(#cupClip)">
      <path d={outline} fill="url(#cupBody)" />
      <Facets id="up" list={upperFacets} move="190 260" />
      <g mask="url(#footMask)"><Facets id="low" list={lowerFacets} move="190 500" /></g>
      <g filter="url(#soft6)" opacity=".5">
        <ellipse cx="400" cy="616" rx="8" ry="14" fill="#ededff" />
        <ellipse cx="362" cy="638" rx="8" ry="12" fill="#fff" />
        <ellipse cx="362" cy="680" rx="8" ry="10" fill="#f4f4ff" />
        <ellipse cx="436" cy="598" rx="8" ry="14" fill="#a8a8ff" />
        <ellipse cx="262" cy="578" rx="6" ry="16" fill="#a4a3ee" />
        <ellipse cx="290" cy="550" rx="6" ry="16" fill="#9c9cf4" />
        <ellipse cx="262" cy="656" rx="8" ry="20" fill="#fff" />
      </g>
      <g fill="none" filter="url(#soft3)">
        <path d="M190 684Q222 668 280 692Q352 722 389 786" stroke="#8b89c6" strokeWidth="18" opacity=".75" />
        <path d="M573 510L383 784" stroke="#555378" strokeWidth="5" opacity=".6" />
        <path d="M337 332L280 477L208 660" stroke="#7d7bb2" strokeWidth="4" opacity=".5" />
        <path d="M195 700Q222 681 280 703Q340 728 368 770L372 800H190z" fill="#4a4968" stroke="#5c5a84" strokeWidth="7" />
      </g>
      <path d="M204 699Q222 688 262 703Q332 728 364 776L366 800H190z" fill="#4a4968" filter="url(#soft1)" />
      <path d="M252 742Q288 738 330 752Q362 764 348 781Q322 782 290 768z" fill="#58567c" filter="url(#soft3)" />
      <path d="M575 362Q598 365 607 382" fill="none" stroke="#8a88c4" strokeWidth="6" opacity=".6" filter="url(#soft3)" />
      <g fill="none" filter="url(#soft1)">
        <path d="M478 297Q484 302 490 309L510 335Q526 352 547 359.500Q560 362 576 364" stroke="#fff" strokeWidth="3" />
        <path d="M372 273Q378 275 385 285Q392 293 404 294.500Q430 292 450 291" stroke="#dcdcff" strokeWidth="3" />
      </g>
    </g>
    <path d="M286 737L300 709 309 694 306 711z" fill="#a9e0a6" stroke="#63a562" strokeWidth=".7" />
    <path d="M301 705l5 2" stroke="#3f7a40" />
    <path d="M281 740L262 738 246 732 260 732z" fill="#d33030" stroke="#9c2323" strokeWidth=".7" />
    <path d="M286 742L302 759 317 769 309 757z" fill="#1136d8" stroke="#0a2292" strokeWidth=".7" />
    <g fontFamily="Liberation Sans" fontSize="13">
      <text x="291" y="690" fill="#3a8246">YC</text>
      <text x="246" y="729" fill="#d23a3a">XC</text>
      <text x="300" y="782" fill="#1a47dd">ZC</text>
    </g>
  </svg>
);

/* ---------- page ---------- */

export default function App() {
  return (
    <Shell>
      <GlobalStyle />
      <Ribbon>
        <Group $width={25}>
          <GroupBody>
            <IconGrid $cols={1} $cell={15}><Tools names={["topCut", "redCut"]} /></IconGrid>
          </GroupBody>
          <GroupLabel><Down /></GroupLabel>
        </Group>
        <Group $width={170}>
          <GroupBody $indent={7}>
            <BigButton $width={42}><LetterTile>A</LetterTile><span>注释</span></BigButton>
            <IconGrid $cols={4} $cell={25}>
              <Tools names={["leader", "balloon", "cross", "target", "datum", "angle", "arcCentre", "hatch", "section", "image", "rough", "paint"]} />
            </IconGrid>
            <IconGrid $cols={1} $cell={14}><IconButton aria-label="中心标记选项"><Down /></IconButton></IconGrid>
          </GroupBody>
          <GroupLabel><span>注释</span><Down /></GroupLabel>
        </Group>
        <Group $width={85}>
          <GroupBody $indent={7}>
            <SketchBox>
              <IconGrid $cols={2} $cell={25}><Tools names={["profile", "rect", "line", "arc", "circle", "plus"]} /></IconGrid>
            </SketchBox>
            <ArrowColumn>
              <IconButton aria-label="上一行"><Down up /></IconButton>
              <IconButton aria-label="下一行"><Down /></IconButton>
              <IconButton aria-label="全部"><Down bar /></IconButton>
            </ArrowColumn>
          </GroupBody>
          <GroupLabel><span>草图</span><Down /></GroupLabel>
        </Group>
        <Group $width={277}>
          <GroupBody $indent={12}>
            <RowStack $large>
              <RowButton><Art name="tableNote" size={24} />表格注释</RowButton>
              <RowButton><Art name="partsList" size={24} />零件明细表</RowButton>
            </RowStack>
            <RowStack>
              <RowButton><Art name="autoBalloon" />自动符号标注</RowButton>
              <RowButton disabled><Art name="holeTable" />孔表</RowButton>
              <RowButton disabled><Art name="bendTable" />折弯表</RowButton>
            </RowStack>
            <BigButton $width={38}><MoreTile><Art name="moreTable" /></MoreTile><span>更多</span><Down /></BigButton>
          </GroupBody>
          <GroupLabel><span>表</span><Down /></GroupLabel>
        </Group>
        <Group $width={73}>
          <GroupBody>
            <BigButton $width={72}>
              <LettersIcon>
                <svg width="32" height="31" viewBox="0 0 32 31">
                  <text x="1" y="13" fontFamily="Liberation Sans" fontStyle="normal" fontSize="18" fill="#4a3a78" stroke="#4a3a78" strokeWidth=".6">A</text>
                  <text x="9" y="26" fontFamily="Liberation Serif" fontWeight="bold" fontStyle="italic" fontSize="32" fill="#3f48b8">A</text>
                  <path d="M6 27.500H30" stroke="#3f48b8" />
                </svg>
              </LettersIcon>
              <span>编辑设置</span>
            </BigButton>
          </GroupBody>
        </Group>
        <Group $width={104}>
          <GroupBody $indent={4}>
            <IconGrid $cols={3} $cell={23} $loose>
              <Tools names={["copyGrid", "layers", "layersList", "boxTick", "sheetTick", "goldTick"]} />
            </IconGrid>
            <IconGrid $cols={1} $cell={30} $loose>
              <IconButton $ruled aria-label="标签"><Art name="tag" /></IconButton>
              <IconButton $ruled aria-label="编辑"><Art name="goldEdit" /></IconButton>
            </IconGrid>
          </GroupBody>
          <GroupLabel><span>标准化工具...</span><Down /></GroupLabel>
        </Group>
        <Group $width={104}>
          <GroupBody $indent={4}>
            <IconGrid $cols={3} $cell={23} $loose>
              <Tools names={["windows", "layersBlue", "hammer", "meshXY", "delta", "listPurple"]} />
            </IconGrid>
          </GroupBody>
        </Group>
        <Group $width={140} $last>
          <GroupBody $indent={2}>
            <IconGrid $cols={6} $cell={23} $loose>
              <Tools names={["tolX", "tolA", "tolB", "tolC", "tolD", "tolBox", "phi", "diaOne", "diaTwo", "back"]} ruled="diaOne" />
            </IconGrid>
          </GroupBody>
          <GroupLabel $end><span>尺寸快速格式化工具 -</span></GroupLabel>
        </Group>
      </Ribbon>

      <Toolbar>
        <Tools names={["filterCut", "filter"]} />
        <ToolArrow aria-label="过滤器选项"><Down /></ToolArrow>
        <Tools names={["snapMove", "snapTree", "snapCube", "marquee"]} />
        <ToolArrow aria-label="选择选项"><Down /></ToolArrow>
        <Tools names={["solidGray", "cubeColor", "dots", "segment", "midpoint", "sCurve", "poly", "spline", "intersect", "centre", "quadrant"]} />
        <Tools names={["plus", "onCurve", "surface"]} />
        <Divider />
        <Tools names={["fit", "pan", "rotate", "prism", "sheetCube", "tiles"]} />
        <ToolArrow aria-label="布局选项"><Down /></ToolArrow>
        <Tools names={["play"]} />
        <ToolArrow aria-label="播放选项"><Down /></ToolArrow>
        <Divider />
      </Toolbar>

      <TabStrip />

      <Viewport><Cup /></Viewport>

      <Watermark>UG<span>爱好者论坛</span> WWW.UGSNX.COM</Watermark>
      <TemplatePanel />
      <ErrorMessage />
    </Shell>
  );
}
